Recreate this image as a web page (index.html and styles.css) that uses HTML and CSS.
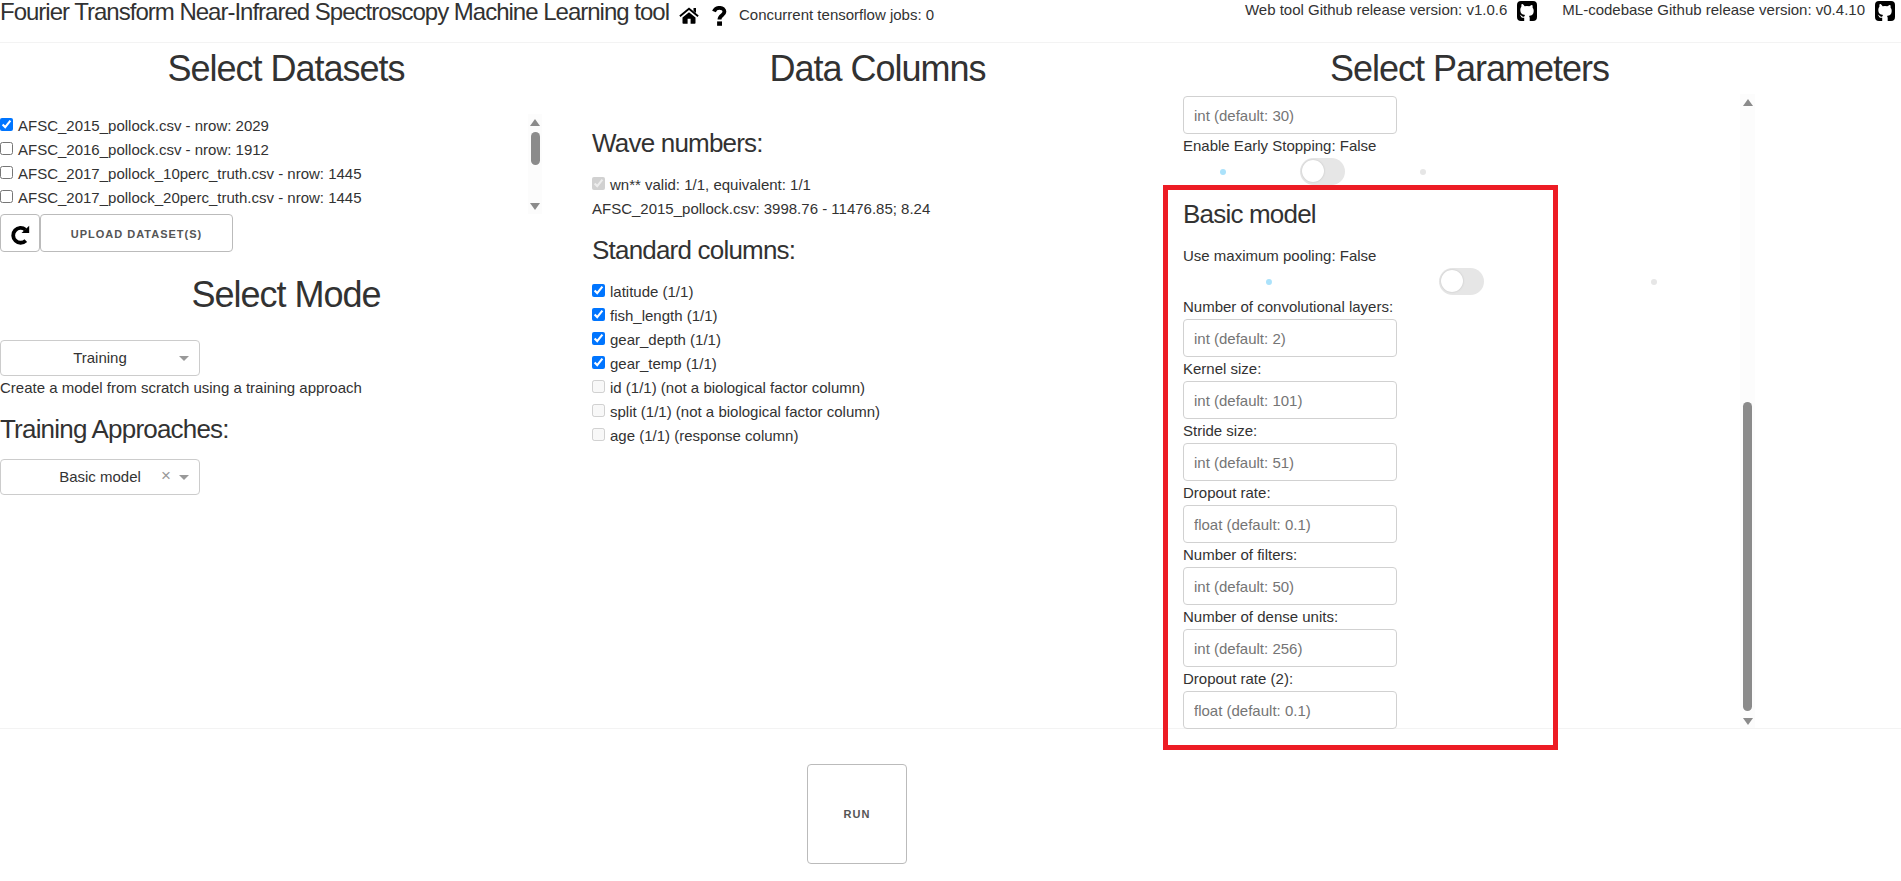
FILE: index.html
```html
<!DOCTYPE html>
<html lang="en">
<head>
<meta charset="utf-8">
<title>FT-NIRS ML tool</title>
<link rel="stylesheet" href="styles.css">
</head>
<body>
<header class="top">
  <h1 class="title">Fourier Transform Near-Infrared Spectroscopy Machine Learning tool</h1>
  <svg class="home" viewBox="0 0 20 17"><path d="M10 5.200 3.500 10.500V16q0 .8.8.8H8.600v-5h3v5h4.100q.8 0 .8-.8v-5.500z"/><path d="M.9 9.200 10 1.800l9.100 7.400" fill="none" stroke="#000" stroke-width="1.900"/><path d="M14.500 1h2.500v5l-2.500-2z"/></svg>
  <svg class="help" viewBox="0 0 15 20"><path d="M2 5.500C3 2.800 5 1.900 7.400 1.900c3.200 0 5 1.700 5 3.900 0 3.700-4.900 3.200-4.900 7.700" fill="none" stroke="#000" stroke-width="3.900"/><path d="M5.100 15.400h4.900v4.400H5.100z"/></svg>
  <span class="jobs">Concurrent tensorflow jobs: 0</span>
  <div class="versions">
    <span>Web tool Github release version: v1.0.6</span>
    <svg class="github" viewBox="0 0 20 20"><path fill-rule="evenodd" d="M4 0h12a4 4 0 0 1 4 4v12a4 4 0 0 1-4 4h-3.300v-3c0-1-.3-1.700-.8-2.100 2.700-.3 4.800-1.300 4.800-5.200 0-1.200-.4-2.200-1.100-2.900.1-.7.100-1.700-.3-2.700-1 0-2 .6-2.900 1.200a10 10 0 0 0-4.800 0C6.700 3.700 5.700 3.100 4.700 3.100c-.4 1-.4 2-.3 2.700-.7.700-1.100 1.700-1.100 2.900 0 3.900 2.100 4.900 4.800 5.200-.4.400-.7.900-.8 1.600-1.400.6-2.400.1-3-.9-.5-.7-1.100-.9-1.600-.8.900.6 1 1.300 1.500 2.100.6.900 1.600 1.100 3 .9V20H4a4 4 0 0 1-4-4V4a4 4 0 0 1 4-4z"/></svg>
    <span class="second">ML-codebase Github release version: v0.4.10</span>
    <svg class="github" viewBox="0 0 20 20"><path fill-rule="evenodd" d="M4 0h12a4 4 0 0 1 4 4v12a4 4 0 0 1-4 4h-3.300v-3c0-1-.3-1.700-.8-2.100 2.700-.3 4.800-1.300 4.800-5.200 0-1.200-.4-2.200-1.100-2.900.1-.7.100-1.700-.3-2.700-1 0-2 .6-2.900 1.200a10 10 0 0 0-4.800 0C6.700 3.700 5.700 3.100 4.700 3.100c-.4 1-.4 2-.3 2.700-.7.700-1.100 1.700-1.100 2.900 0 3.900 2.100 4.900 4.800 5.200-.4.400-.7.900-.8 1.600-1.400.6-2.400.1-3-.9-.5-.7-1.100-.9-1.600-.8.900.6 1 1.300 1.500 2.100.6.900 1.600 1.100 3 .9V20H4a4 4 0 0 1-4-4V4a4 4 0 0 1 4-4z"/></svg>
  </div>
</header>
<main class="columns">
  <section class="left">
    <h2>Select Datasets</h2>
    <div class="datasets">
      <div class="rows">
        <label><input type="checkbox" checked>AFSC_2015_pollock.csv - nrow: 2029</label>
        <label><input type="checkbox">AFSC_2016_pollock.csv - nrow: 1912</label>
        <label><input type="checkbox">AFSC_2017_pollock_10perc_truth.csv - nrow: 1445</label>
        <label><input type="checkbox">AFSC_2017_pollock_20perc_truth.csv - nrow: 1445</label>
      </div>
      <div class="scroll"><i class="up"></i><i class="thumb"></i><i class="down"></i></div>
    </div>
    <div class="buttons">
      <button class="refresh"><svg viewBox="0 0 20 20"><path d="M15.400 4.700A7.400 7.400 0 1 0 15.800 15.600" fill="none" stroke="#000" stroke-width="3.800"/><path d="M19.200.7v7.400H11.500z"/></svg></button>
      <button class="upload">Upload Dataset(s)</button>
    </div>
    <h2 class="mode">Select Mode</h2>
    <div class="select"><span>Training</span><i class="arrow"></i></div>
    <div class="note">Create a model from scratch using a training approach</div>
    <h3 class="approach">Training Approaches:</h3>
    <div class="select"><span>Basic model</span><b>×</b><i class="arrow"></i></div>
  </section>
  <section class="middle">
    <h2>Data Columns</h2>
    <h3 class="wave">Wave numbers:</h3>
    <label><input type="checkbox" checked disabled>wn** valid: 1/1, equivalent: 1/1</label>
    <div class="line">AFSC_2015_pollock.csv: 3998.76 - 11476.85; 8.24</div>
    <h3 class="standard">Standard columns:</h3>
    <label><input type="checkbox" checked>latitude (1/1)</label>
    <label><input type="checkbox" checked>fish_length (1/1)</label>
    <label><input type="checkbox" checked>gear_depth (1/1)</label>
    <label><input type="checkbox" checked>gear_temp (1/1)</label>
    <label><input type="checkbox" disabled>id (1/1) (not a biological factor column)</label>
    <label><input type="checkbox" disabled>split (1/1) (not a biological factor column)</label>
    <label><input type="checkbox" disabled>age (1/1) (response column)</label>
  </section>
  <section class="right">
    <h2>Select Parameters</h2>
    <div class="params">
      <div class="form">
        <input class="field" type="text" placeholder="int (default: 30)">
        <div class="line">Enable Early Stopping: False</div>
        <div class="toggle narrow"><i class="dot on"></i><i class="switch"></i><i class="dot"></i></div>
        <h3 class="basic">Basic model</h3>
        <div class="line">Use maximum pooling: False</div>
        <div class="toggle"><i class="dot on"></i><i class="switch"></i><i class="dot"></i></div>
        <div class="line">Number of convolutional layers:</div>
        <input class="field" type="text" placeholder="int (default: 2)">
        <div class="line">Kernel size:</div>
        <input class="field" type="text" placeholder="int (default: 101)">
        <div class="line">Stride size:</div>
        <input class="field" type="text" placeholder="int (default: 51)">
        <div class="line">Dropout rate:</div>
        <input class="field" type="text" placeholder="float (default: 0.1)">
        <div class="line">Number of filters:</div>
        <input class="field" type="text" placeholder="int (default: 50)">
        <div class="line">Number of dense units:</div>
        <input class="field" type="text" placeholder="int (default: 256)">
        <div class="line">Dropout rate (2):</div>
        <input class="field" type="text" placeholder="float (default: 0.1)">
      </div>
      <div class="scroll tall"><i class="up"></i><i class="thumb"></i><i class="down"></i></div>
    </div>
    <div class="highlight"></div>
  </section>
</main>
<footer class="bottom"><button class="run">Run</button></footer>
</body>
</html>
```

FILE: styles.css
```css
* { box-sizing: border-box; }
body {
  margin: 0;
  width: 1901px;
  height: 881px;
  overflow: hidden;
  background: #fff;
  color: #323232;
  font: 15px/24px "Liberation Sans", Arial, sans-serif;
}
h1, h2, h3 { margin: 0; font-weight: 400; white-space: nowrap; }
h2 { font-size: 36px; line-height: 45px; letter-spacing: -1px; text-align: center; padding-top: 3px; height: 51px; }
h3 { font-size: 26px; line-height: 35px; letter-spacing: -0.8px; }

.top { display: flex; height: 43px; border-bottom: 1px solid #f3f3f3; }
.title { font-size: 24px; line-height: 24px; letter-spacing: -1px; width: 670px; }
.home { width: 20px; height: 17px; margin: 7px 0 0 9px; }
.help { width: 15px; height: 20px; margin: 6px 0 0 13px; }
.jobs { margin: 3px 0 0 12px; }
.versions { display: flex; margin-left: auto; padding-right: 6px; line-height: 20px; white-space: nowrap; }
.github { width: 20px; height: 20px; margin: 1px 0 0 10px; }
.second { margin-left: 25px; }

.columns { display: flex; height: 685px; }
.left { width: 592px; padding-right: 20px; }
.middle { width: 591px; }
.middle h2 { width: 571px; }
.right { position: relative; width: 573px; }

label { display: flex; height: 24px; white-space: nowrap; }
label input { width: 13px; height: 13px; margin: 4px 5px 0 0; flex: none; accent-color: #0075ff; }

.left h2 { width: 572px; }
.datasets { display: flex; height: 100px; width: 542px; margin-top: 20px; overflow: hidden; }
.rows { width: 528px; }
.scroll { display: flex; flex-direction: column; align-items: center; width: 14px; background: #fcfcfc; padding: 5px 0 4px; }
.scroll .up { border: 5px solid transparent; border-top: 0; border-bottom: 7px solid #8b8b8b; }
.scroll .down { border: 5px solid transparent; border-bottom: 0; border-top: 7px solid #8b8b8b; margin-top: auto; }
.scroll .thumb { width: 9px; height: 33px; border-radius: 5px; background: #8b8b8b; margin-top: 6px; }

button {
  border: 1px solid #bbb; border-radius: 4px; background: #fff; color: #555; padding: 0;
  font: 600 11px/36px "Liberation Sans", Arial, sans-serif; letter-spacing: 1px; text-transform: uppercase;
}
.buttons { display: flex; }
.refresh { width: 40px; height: 38px; display: flex; padding: 10px 0 0 9px; }
.refresh svg { width: 20px; height: 20px; }
.upload { width: 193px; height: 38px; padding-top: 1px; }
.mode { height: 71px; margin-top: 17px; }
.select {
  position: relative; display: flex; align-items: center; width: 200px; height: 36px;
  border: 1px solid #ccc; border-radius: 4px; color: #333;
}
.select span { flex: 1; text-align: center; }
.select b { position: absolute; left: 160px; top: 4px; font-size: 17px; font-weight: 400; color: #999; }
.select .arrow { position: absolute; left: 178px; top: 15px; border: 5px solid transparent; border-top-color: #999; border-bottom: 0; }
.note { height: 24px; }
.approach { margin: 12px 0; }

.wave { margin: 32px 0 12px; }
.standard { margin: 12px 0; }

.params { display: flex; height: 634px; }
.form { width: 557px; padding-top: 2px; }
.field {
  display: block; width: 214px; height: 38px; border: 1px solid #d1d1d1; border-radius: 4px;
  padding: 6px 10px; font: 15px "Liberation Sans", Arial, sans-serif; background: #fff;
}
.field::placeholder { color: #757575; opacity: 1; }
.line { height: 24px; white-space: nowrap; }
.toggle { display: flex; align-items: center; justify-content: space-around; width: 557px; height: 27px; }
.narrow { width: 280px; }
.dot { width: 6px; height: 6px; border-radius: 50%; background: #e6e6e6; }
.dot.on { background: #abe2fb; }
.switch { width: 45px; height: 27px; border-radius: 14px; background: #e6e6e6; padding: 2px; }
.switch::before { content: ""; display: block; width: 22px; height: 22px; border-radius: 50%; background: #fff; box-shadow: 0 0 2px #bbb; }
.basic { margin: 12px 0; }
.tall { width: 15px; padding-bottom: 3px; }
.tall .thumb { height: 309px; margin-top: 296px; }
.highlight { position: absolute; left: -20px; top: 142px; width: 395px; height: 565px; border: 5px solid #ed1c24; }

.bottom { border-top: 1px solid #f3f3f3; height: 153px; padding: 35px 0 0 807px; }
.run { width: 100px; height: 100px; }
```
